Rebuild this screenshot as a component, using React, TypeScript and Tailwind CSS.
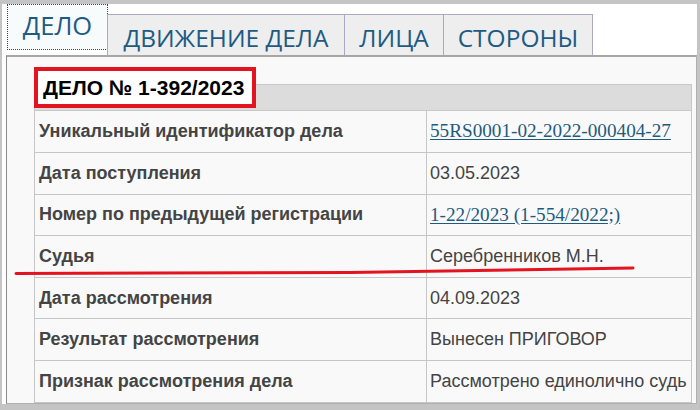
import React from 'react';

type Row = { label: string; value: string; link?: boolean };

const rows: Row[] = [
  { label: 'Уникальный идентификатор дела', value: '55RS0001-02-2022-000404-27', link: true },
  { label: 'Дата поступления', value: '03.05.2023' },
  { label: 'Номер по предыдущей регистрации', value: '1-22/2023 (1-554/2022;)', link: true },
  { label: 'Судья', value: 'Серебренников М.Н.' },
  { label: 'Дата рассмотрения', value: '04.09.2023' },
  { label: 'Результат рассмотрения', value: 'Вынесен ПРИГОВОР' },
  { label: 'Признак рассмотрения дела', value: 'Рассмотрено единолично судь' },
];

const tabs = ['ДВИЖЕНИЕ ДЕЛА', 'ЛИЦА', 'СТОРОНЫ'];
const tabWidths = ['w-[238px]', 'w-[100px]', 'w-[150px]'];

export default function App() {
  return (
    <div className="relative w-[700px] h-[410px] overflow-hidden bg-[#c4c4c4] pt-[4px] pl-[2px] pr-[3px] pb-[6px]">
      <div className="h-full bg-white flex flex-col">
        {/* Tabs */}
        <div className="flex items-end pl-[5px] h-[51px] font-['Open_Sans',sans-serif] text-[#1d5b84]">
          <div className="w-[101px] h-[51px] self-start pb-[5px]">
            <div className="h-full border border-dotted border-[#444] bg-[#f8fbfc] flex items-center justify-center text-[25.5px] leading-none pb-[3px]">
              ДЕЛО
            </div>
          </div>
          {tabs.map((t, i) => (
            <div
              key={t}
              className={`${tabWidths[i]} h-[41px] -ml-px first:ml-0 border border-b-0 border-[#a9a9c6] bg-[#eeeeee] flex items-center justify-center text-[24.5px] leading-none pt-[6px]`}
            >
              {t}
            </div>
          ))}
        </div>

        {/* Panel */}
        <div className="flex-1 ml-[4px] border-t-2 border-[#a6a6a6] border-l border-r border-b border-l-[#8a8a8a] border-r-[#b0b0b0] border-b-[#b0b0b0] bg-[#f9f9f9] pl-[27px] pr-[3px] pt-[10px]">
          <div className="relative mt-[17px] h-[27px] w-[658px] bg-[#dcdcdc] border border-[#c8c8c8]">
            <div className="absolute -top-[18px] -left-px w-[222px] h-[41px] border-[4px] border-[#e3141f] bg-white flex items-center pl-[5px] font-['Liberation_Sans',Arial,sans-serif] font-bold text-[21px] text-black">
              ДЕЛО № 1-392/2023
            </div>
          </div>
          <table className="w-[658px] border-collapse font-['Liberation_Sans',Arial,sans-serif] text-[#444]">
            <tbody>
              {rows.map((r) => (
                <tr key={r.label} className="h-[41.6px]">
                  <td className="w-[392px] border border-[#c6c6c6] border-t-0 pl-[4px] font-bold text-[18px]">
                    {r.label}
                  </td>
                  <td className="border border-[#c6c6c6] border-t-0 pl-[3px] whitespace-nowrap overflow-hidden">
                    {r.link ? (
                      <a className="font-['Liberation_Serif','Times_New_Roman',serif] text-[19.2px] text-[#1f5b7e] underline underline-offset-2">
                        {r.value}
                      </a>
                    ) : (
                      <span className="text-[18px]">{r.value}</span>
                    )}
                  </td>
                </tr>
              ))}
            </tbody>
          </table>
        </div>
      </div>

      {/* Hand-drawn red underline */}
      <svg className="absolute left-0 top-0 pointer-events-none" width="700" height="410">
        <path
          d="M16 273.5 C120 273, 330 272.5, 350 272.5 C420 271.5, 530 269.5, 633 268"
          stroke="#e3141f"
          strokeWidth="3"
          fill="none"
          strokeLinecap="round"
        />
      </svg>
    </div>
  );
}
